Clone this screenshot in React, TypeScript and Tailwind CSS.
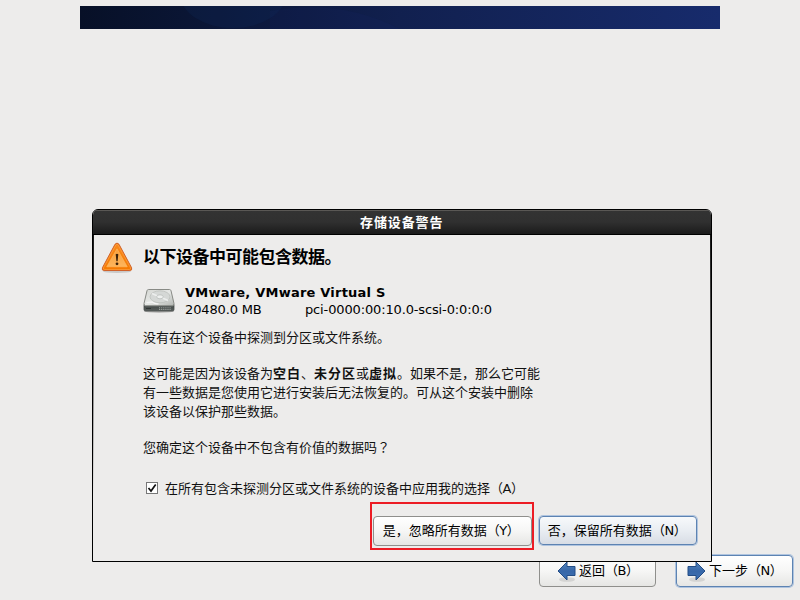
import type { ReactNode } from "react";

const sans = "font-['DejaVu_Sans','Noto_Sans_CJK_SC',sans-serif]";
const cjk = "font-['Noto_Sans_CJK_SC',sans-serif]";

function Line({ children, className = "" }: { children: ReactNode; className?: string }) {
  return <p className={`whitespace-nowrap text-[13px] leading-[19px] text-[#111] ${cjk} ${className}`}>{children}</p>;
}

function Strong({ children }: { children: ReactNode }) {
  return <b className="font-bold tracking-[1px]">{children}</b>;
}

function Key({ children }: { children: ReactNode }) {
  return <span className="tracking-[-0.5px]">（<span className={sans}>{children}</span>）</span>;
}

function WarningIcon() {
  return (
    <svg width="32" height="32" viewBox="0 0 32 32" className="block">
      <defs>
        <linearGradient id="warn" x1="0" y1="0" x2="0" y2="1">
          <stop offset="0" stopColor="#f98a1c" />
          <stop offset="1" stopColor="#f57900" />
        </linearGradient>
        <linearGradient id="warnIn" x1="0" y1="0" x2="0" y2="1">
          <stop offset="0" stopColor="#f8a03c" />
          <stop offset="1" stopColor="#fdb55c" />
        </linearGradient>
      </defs>
      <ellipse cx="16" cy="29.500" rx="14" ry="1.4" fill="#000" opacity=".15" />
      <path d="M14 2.300Q16 -.2 18 2.300L30.600 25.800Q31.400 28.500 28.900 28.500H3.100Q.6 28.500 1.400 25.800Z" fill="url(#warn)" stroke="#d0622b" />
      <path d="M14.900 3Q16 1.400 17.100 3L29.500 25.800Q30 27.500 28.400 27.500H3.600Q2 27.500 2.500 25.800Z" fill="none" stroke="#fcaf5c" strokeWidth=".5" />
      <path d="M16 6.800L26.300 24.800H5.700Z" fill="url(#warnIn)" stroke="#fdba66" strokeWidth=".6" strokeLinejoin="round" />
      <path d="M14.700 12.200Q16 11.200 17.300 12.200L16.600 19.200H15.400Z" fill="#3a2008" />
      <circle cx="16" cy="21.800" r="1.400" fill="#3a2008" />
    </svg>
  );
}

function DiskIcon() {
  return (
    <svg width="32" height="25" viewBox="0 0 32 25" className="block">
      <defs>
        <linearGradient id="disk" x1="0" y1="0" x2="1" y2="1">
          <stop offset="0" stopColor="#d4d6d2" />
          <stop offset=".5" stopColor="#e6e8e6" />
          <stop offset="1" stopColor="#b2b5b1" />
        </linearGradient>
        <linearGradient id="diskFront" x1="0" y1="0" x2="0" y2="1">
          <stop offset="0" stopColor="#3e4443" />
          <stop offset="1" stopColor="#5a605e" />
        </linearGradient>
      </defs>
      <ellipse cx="16" cy="23.300" rx="15" ry="1.400" fill="#000" opacity=".25" />
      <path d="M1 16.500H31V21.500Q31 23 29.500 23H2.500Q1 23 1 21.500Z" fill="url(#diskFront)" stroke="#4c514f" strokeWidth=".8" />
      <path d="M5.400 1.500H26.600Q27.600 1.500 28 2.700L31 15.500Q31 17.800 29.500 17.800H2.500Q1 17.800 1 15.500L4 2.700Q4.400 1.500 5.400 1.500Z" fill="url(#disk)" stroke="#888a85" />
      <ellipse cx="17" cy="8.800" rx="10" ry="6" fill="#d5d8d6" stroke="#bcc0bd" strokeWidth=".8" />
      <path d="M9 5.500L14.500 8M19.500 10L25 12.500" stroke="#eceeed" strokeWidth="1.500" />
      <ellipse cx="17" cy="8.800" rx="3.300" ry="2" fill="#eef0ef" stroke="#b3b7b4" strokeWidth=".7" />
      <path d="M3.500 14.500L9 14Q12 16.300 15.500 15.800" fill="none" stroke="#f6f6f6" strokeWidth="1.100" />
      <path d="M16 19.800H28M16 21.500H28" stroke="#a4a8a5" strokeWidth=".9" strokeDasharray="1.200 .9" />
      <path d="M3 20.500H8" stroke="#303533" strokeWidth="1" />
    </svg>
  );
}

function Arrow({ back = false }: { back?: boolean }) {
  return (
    <svg width="20" height="22" viewBox="0 0 20 22" className="block shrink-0">
      <defs>
        <linearGradient id="arrow" x1="0" y1="0" x2="0" y2="1">
          <stop offset="0" stopColor="#5485bd" />
          <stop offset=".5" stopColor="#3767a8" />
          <stop offset="1" stopColor="#3d70b3" />
        </linearGradient>
      </defs>
      <ellipse cx="10" cy="19.500" rx="8" ry="2.300" fill="#000" opacity=".1" />
      <path
        transform={back ? "matrix(-1 0 0 1 19.500 0)" : "translate(-.5 0)"}
        d="M1.500 6.500H9.500V2L18.500 11L9.500 20V15.500H1.500Z"
        fill="url(#arrow)"
        stroke="#234d86"
        strokeLinejoin="round"
      />
    </svg>
  );
}

const plainBorder = "border-[#8f8f8c] bg-linear-to-b from-white via-[#f6f6f5] to-[#e6e6e4]";
const focusBorder = "border-[#5d83b2] shadow-[0_0_0_1px_#afc4df]";

export default function App() {
  return (
    <div className={`relative flex h-[600px] w-[800px] flex-col overflow-hidden bg-[#edeceb] text-black ${sans}`}>
      <header className="mx-20 mt-1.5 h-[23px] overflow-hidden bg-linear-to-r from-[#071027] via-[#11204f] to-[#172b6c]">
        <svg width="640" height="23" className="block">
          <ellipse cx="153" cy="-12" rx="53" ry="34" fill="#11306a" opacity=".18" />
          <path d="M190 5Q260 -8 320 23H190Z" fill="#1a2a72" opacity=".12" />
        </svg>
      </header>

      <footer className={`mt-auto mr-[7px] mb-[13px] flex justify-end gap-5 text-[13px] ${cjk}`}>
        <button className={`flex h-8 w-[117px] items-center rounded-[4px] border pl-[17px] ${plainBorder}`}>
          <Arrow back />
          <span className="ml-[2px] -mt-0.5 whitespace-nowrap">返回<Key>B</Key></span>
        </button>
        <button className={`flex h-8 w-[117px] items-center rounded-[4px] border bg-linear-to-b from-white via-[#f6f6f5] to-[#e6e6e4] pl-[10px] ${focusBorder}`}>
          <Arrow />
          <span className="ml-[2px] -mt-0.5 whitespace-nowrap">下一步<Key>N</Key></span>
        </button>
      </footer>

      <section className="absolute top-[209px] left-[92px] flex h-[353px] w-[620px] flex-col overflow-hidden rounded-t-[6px] border border-black bg-[#edeceb]">
        <h1 className={`h-[25px] shrink-0 border-b border-black bg-linear-to-b from-[#333] via-[#303030] to-[#1b1b1b] pl-[267px] text-[13px] leading-[23px] font-bold tracking-[0.9px] text-white shadow-[inset_0_1px_#5a5855] ${cjk}`}>
          存储设备警告
        </h1>
        <div className="flex grow bg-linear-to-b from-[#181818] to-[#edeceb] to-80% px-px">
          <div className="flex grow bg-[#edeceb] pt-[7px] pl-[7px]">
            <WarningIcon />
            <div className="ml-[10px] flex w-[560px] flex-col">
              <h2 className={`h-[42px] pt-px text-[17px] leading-[26px] font-bold tracking-[-0.5px] whitespace-nowrap ${cjk}`}>
                以下设备中可能包含数据。
              </h2>
              <div className="flex h-[43px]">
                <div className="pt-1"><DiskIcon /></div>
                <div className="ml-[10px] text-[13px] leading-[17px] whitespace-nowrap">
                  <p className="font-bold tracking-[0.22px]">VMware, VMware Virtual S</p>
                  <p className="flex tracking-[-0.14px]">
                    <span className="w-[120px]">20480.0 MB</span>
                    <span>pci-0000:00:10.0-scsi-0:0:0:0</span>
                  </p>
                </div>
              </div>
              <Line>没有在这个设备中探测到分区或文件系统。</Line>
              <Line className="mt-[17px]">
                这可能是因为该设备为<Strong>空白</Strong>、<Strong>未分区</Strong>或<Strong>虚拟</Strong>。如果不是，那么它可能
              </Line>
              <Line>有一些数据是您使用它进行安装后无法恢复的。可从这个安装中删除</Line>
              <Line>该设备以保护那些数据。</Line>
              <Line className="mt-[17px]">
                您确定这个设备中不包含有价值的数据吗<span lang="zh-TW" className="font-['Noto_Sans_CJK_TC',sans-serif]">？</span>
              </Line>
              <label className="mt-[22px] flex items-center pl-[3px]">
                <span className="mb-px flex size-3 items-center justify-center border border-[#777] bg-white">
                  <svg width="10" height="10" viewBox="0 0 10 10">
                    <path d="M1.500 5L4 8L8.700 1.500" fill="none" stroke="#111" strokeWidth="1.700" />
                  </svg>
                </span>
                <Line className="ml-[7px]">
                  在所有包含未探测分区或文件系统的设备中应用我的选择<Key>A</Key>
                </Line>
              </label>
              <div className={`mt-[4px] ml-[227px] flex items-center gap-[5px] text-[13px] ${cjk}`}>
                <div className="h-12 w-[164px] border-2 border-[#ec1c24] p-px pt-[12px]">
                  <button className={`block h-[30px] w-[159px] rounded-[4px] border pr-[3px] pb-px whitespace-nowrap ${plainBorder}`}>
                    是，忽略所有数据<Key>Y</Key>
                  </button>
                </div>
                <button className={`mt-[9px] h-[29px] w-[158px] shrink-0 rounded-[4px] border bg-linear-to-b from-[#f7f9fb] via-[#e9edf2] to-[#d8dde5] pr-0.5 whitespace-nowrap ${focusBorder}`}>
                  否，保留所有数据<Key>N</Key>
                </button>
              </div>
            </div>
          </div>
        </div>
      </section>
    </div>
  );
}
